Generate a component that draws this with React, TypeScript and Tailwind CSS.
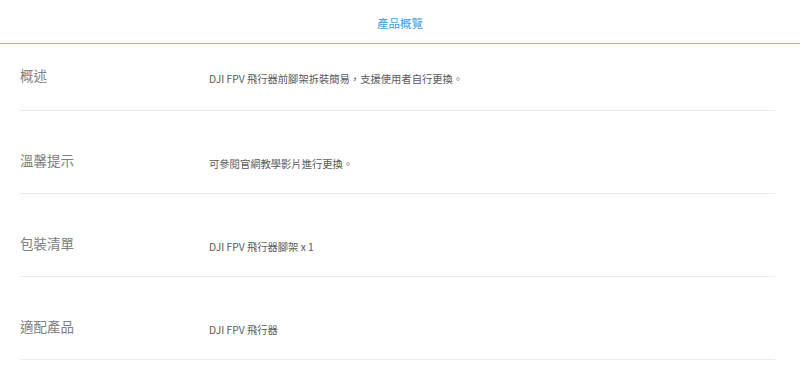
const rows = [
  { label: '概述', text: 'DJI FPV 飛行器前腳架拆裝簡易，支援使用者自行更換。' },
  { label: '溫馨提示', text: '可參閱官網教學影片進行更換。' },
  { label: '包裝清單', text: 'DJI FPV 飛行器腳架 x 1' },
  { label: '適配產品', text: 'DJI FPV 飛行器' },
];

const font = { fontFamily: '"Noto Sans CJK TC", "Noto Sans", sans-serif' };

export default function App() {
  return (
    <div className="h-[378px] w-[800px] overflow-hidden bg-white" style={font}>
      <div className="flex h-[44px] items-center justify-center border-b border-[#8dbde2] pt-[5px]">
        <span className="text-[11.5px] text-[#3f9ae0]">產品概覽</span>
      </div>
      <div className="pl-5 pr-[25px]">
        {rows.map((r, i) => (
          <div
            key={r.label}
            className={`flex items-start border-b border-[#ececec] ${i === 0 ? 'h-[67px] pt-[21px]' : 'h-[83px] pt-[39px]'}`}
          >
            <div className="w-[189px] shrink-0 text-[13.5px] leading-5 text-[#808080]">{r.label}</div>
            <div className="pt-[4px] text-[10.3px] leading-5 text-[#5a5a5a]">{r.text}</div>
          </div>
        ))}
      </div>
    </div>
  );
}
